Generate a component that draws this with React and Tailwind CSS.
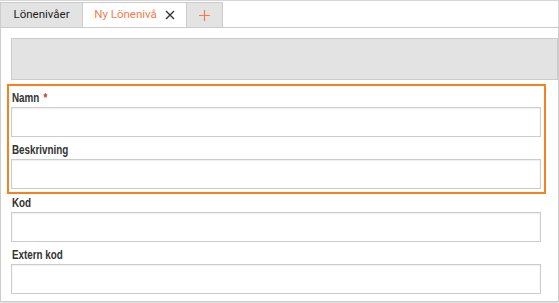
import React from "react";

const labelCls =
  "block text-[12px] leading-[16px] font-bold text-[#333] pl-px font-['Liberation_Sans',Arial,sans-serif]";
const inputCls =
  "block w-[530px] h-[30px] border border-[#cccccc] bg-white shadow-[inset_0_1px_2px_rgba(0,0,0,0.07)] outline-none";

function Field({ label, required, className = "", gap = "mb-px" }) {
  return (
    <div className={className}>
      <label className={`${labelCls} ${gap}`}>
        {/* narrow face: Arial-width font squeezed to Arial Narrow proportions */}
        <span className="inline-block origin-left scale-x-[0.82] whitespace-nowrap">
          {label}
          {required && <span className="text-[#c0392b] ml-[5px]">*</span>}
        </span>
      </label>
      <input className={inputCls} />
    </div>
  );
}

function CloseIcon() {
  return (
    <svg width="10" height="10" viewBox="0 0 10 10" className="text-[#333]">
      <path d="M1 1 L9 9 M9 1 L1 9" stroke="currentColor" strokeWidth="1.4" fill="none" />
    </svg>
  );
}

function PlusIcon() {
  return (
    <svg width="11" height="11" viewBox="0 0 11 11" className="text-[#f47c4c]">
      <path d="M5.5 0 V11 M0 5.5 H11" stroke="currentColor" strokeWidth="1.2" fill="none" />
    </svg>
  );
}

export default function App() {
  return (
    <div className="w-[559px] h-[303px] bg-white font-['Roboto',sans-serif]">
      {/* tab strip */}
      <div className="h-[27px] border-t border-r border-[#d6d6d6] pt-px flex items-start">
        <div className="w-[83px] h-[25px] border-l border-t border-r border-[#cccccc] bg-[#e3e3e3] flex items-center justify-center text-[11.5px] text-[#222]">
          Lönenivåer
        </div>
        <div className="w-[104px] h-[25px] border-t border-r border-[#cccccc] bg-white flex items-center justify-center gap-[8px] text-[11.5px] text-[#f47c4c]">
          <span>Ny Lönenivå</span>
          <CloseIcon />
        </div>
        <div className="w-[36px] h-[25px] border-t border-r border-[#cccccc] bg-[#e3e3e3] flex items-center justify-center">
          <PlusIcon />
        </div>
      </div>

      {/* panel */}
      <div className="h-[275px] border border-[#cccccc] shadow-[0_1px_2px_rgba(0,0,0,0.18)] bg-white">
        <div className="ml-[10px] mt-[10px] h-[42px] border border-[#cccccc] bg-[#e3e3e3]" />

        <div className="mt-[4px] ml-[6px] w-[539px] border-2 border-[#f68121] pl-[2px] pt-[4px] pb-[3px]">
          <Field label="Namn" required />
          <Field label="Beskrivning" className="mt-[5px]" />
        </div>

        <div className="ml-[10px]">
          <Field label="Kod" className="pt-px" gap="mb-[1px]" />
          <Field label="Extern kod" className="mt-[5px]" />
        </div>
      </div>
    </div>
  );
}
